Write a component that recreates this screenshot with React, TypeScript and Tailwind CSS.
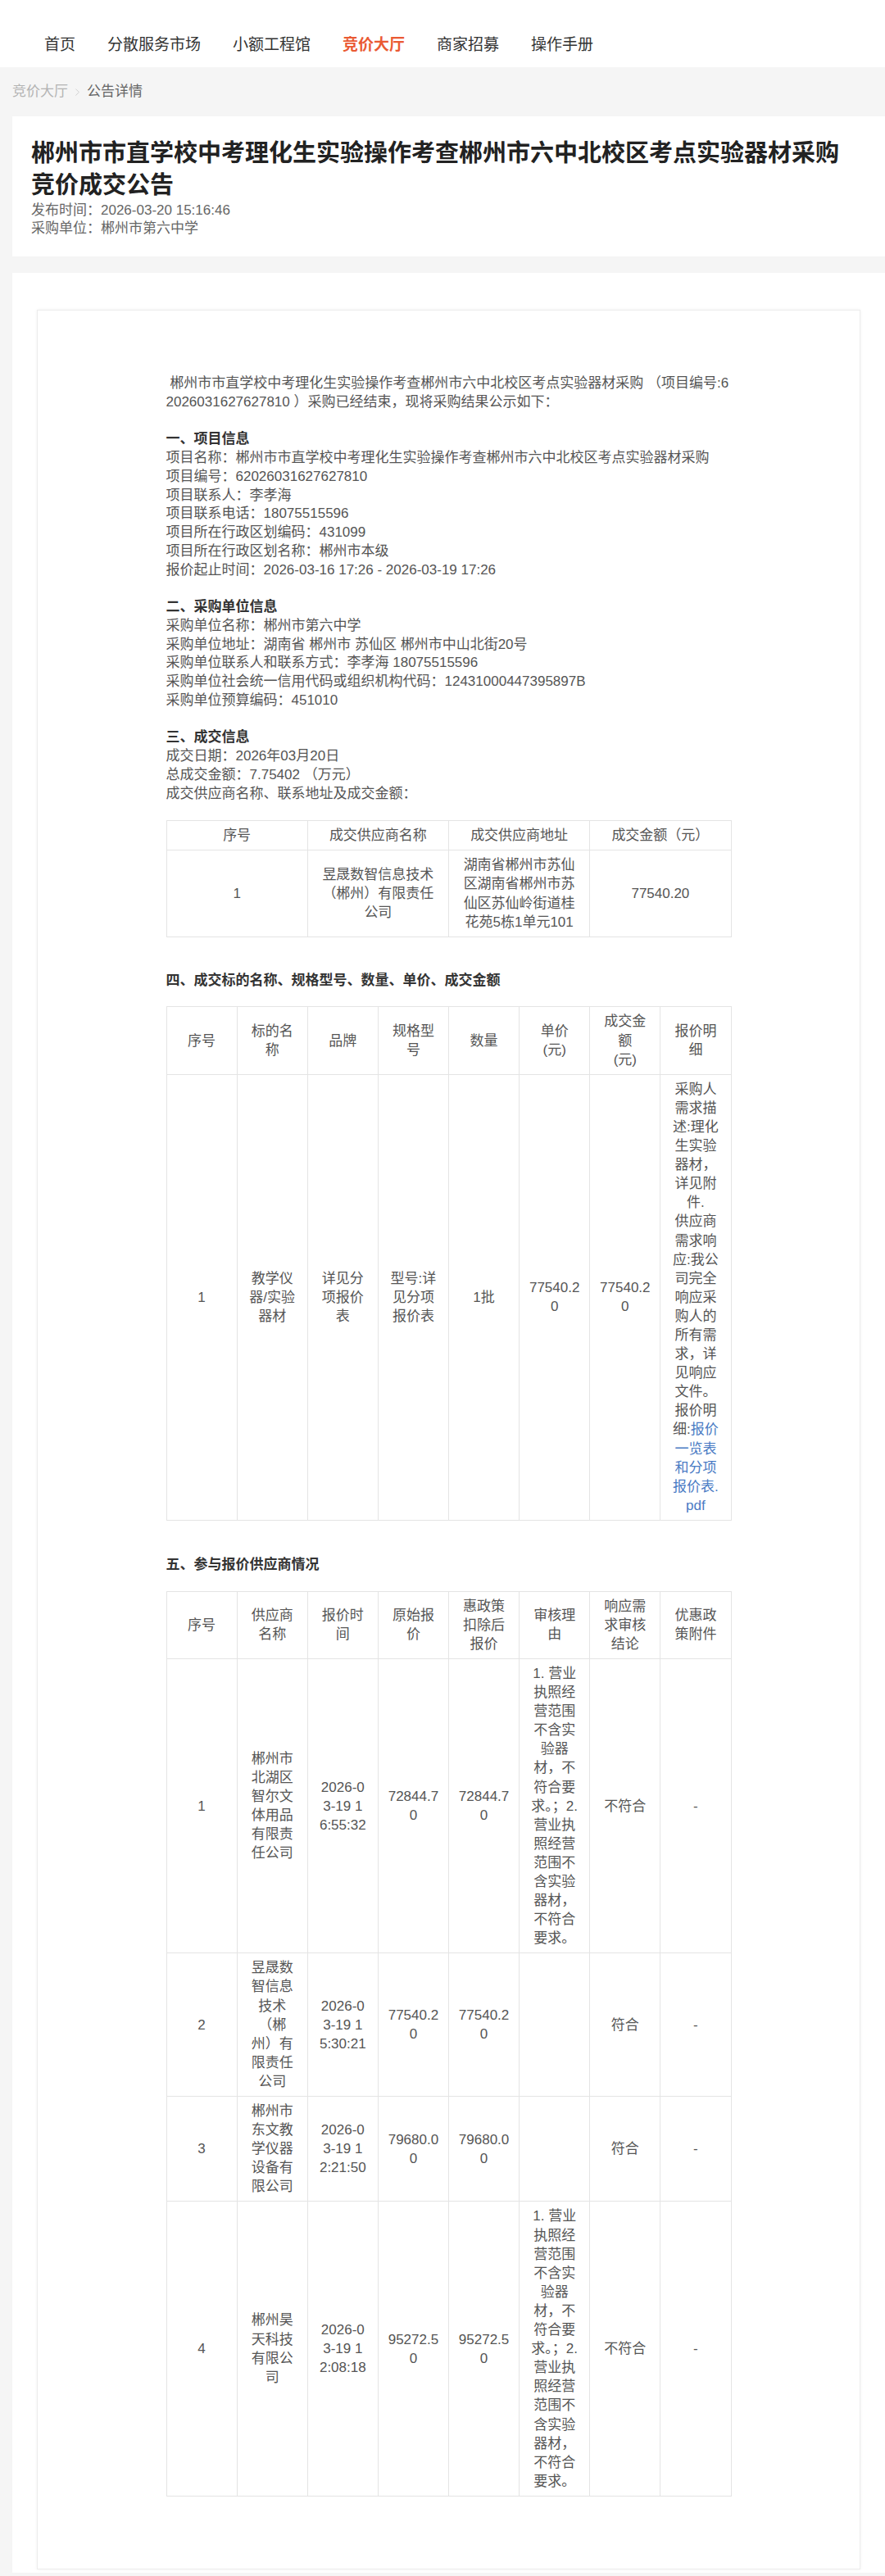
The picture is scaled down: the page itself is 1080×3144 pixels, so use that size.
import { ChevronRight } from 'lucide-react';

const NAV = ['首页', '分散服务市场', '小额工程馆', '竞价大厅', '商家招募', '操作手册'];

const PROJECT = [
  '项目名称：郴州市市直学校中考理化生实验操作考查郴州市六中北校区考点实验器材采购',
  '项目编号：62026031627627810',
  '项目联系人：李孝海',
  '项目联系电话：18075515596',
  '项目所在行政区划编码：431099',
  '项目所在行政区划名称：郴州市本级',
  '报价起止时间：2026-03-16 17:26 - 2026-03-19 17:26',
];

const BUYER = [
  '采购单位名称：郴州市第六中学',
  '采购单位地址：湖南省 郴州市 苏仙区 郴州市中山北街20号',
  '采购单位联系人和联系方式：李孝海 18075515596',
  '采购单位社会统一信用代码或组织机构代码：12431000447395897B',
  '采购单位预算编码：451010',
];

const DEAL = [
  '成交日期：2026年03月20日',
  '总成交金额：7.75402 （万元）',
  '成交供应商名称、联系地址及成交金额：',
];

const REJECT =
  '1. 营业\n执照经\n营范围\n不含实\n验器\n材，不\n符合要\n求。；2.\n营业执\n照经营\n范围不\n含实验\n器材，\n不符合\n要求。';

const BIDDERS = [
  ['1', '郴州市\n北湖区\n智尔文\n体用品\n有限责\n任公司', '2026-0\n3-19 1\n6:55:32', '72844.7\n0', '72844.7\n0', REJECT, '不符合', '-'],
  ['2', '昱晟数\n智信息\n技术\n（郴\n州）有\n限责任\n公司', '2026-0\n3-19 1\n5:30:21', '77540.2\n0', '77540.2\n0', '', '符合', '-'],
  ['3', '郴州市\n东文教\n学仪器\n设备有\n限公司', '2026-0\n3-19 1\n2:21:50', '79680.0\n0', '79680.0\n0', '', '符合', '-'],
  ['4', '郴州昊\n天科技\n有限公\n司', '2026-0\n3-19 1\n2:08:18', '95272.5\n0', '95272.5\n0', REJECT, '不符合', '-'],
];

const cell =
  'border border-[#e4e4e4] px-[10px] py-[6px] text-center align-middle whitespace-pre leading-[23.1px] font-normal';

function Table({ head, rows }: { head: string[]; rows: React.ReactNode[][] }) {
  return (
    <table className="w-[690px] table-fixed border-collapse text-[17px] text-[#555]">
      <thead>
        <tr>
          {head.map((h, i) => (
            <th key={i} className={cell}>{h}</th>
          ))}
        </tr>
      </thead>
      <tbody>
        {rows.map((r, i) => (
          <tr key={i}>
            {r.map((c, j) => (
              <td key={j} className={cell}>{c}</td>
            ))}
          </tr>
        ))}
      </tbody>
    </table>
  );
}

export default function App() {
  return (
    <div className="min-h-screen bg-[#f5f5f5] font-[family-name:'Liberation_Sans','Noto_Sans_CJK_SC',sans-serif] text-[#333]">
      {/* ── Top nav ── */}
      <nav className="h-[82px] bg-white pt-[42px] pl-[54px]">
        <ul className="flex gap-[39px] text-[19px] leading-[26px]">
          {NAV.map((n) => (
            <li key={n} className={n === '竞价大厅' ? 'text-[#ea5a33] font-bold' : 'text-[#333]'}>
              {n}
            </li>
          ))}
        </ul>
      </nav>

      <main className="pl-[15px]">
        {/* ── Breadcrumb ── */}
        <div className="h-[60px] flex items-center text-[17px]">
          <span className="text-[#b3b3b3]">竞价大厅</span>
          <ChevronRight size={15} strokeWidth={1.3} className="text-[#c8c8c8] mx-[4px]" />
          <span className="text-[#666]">公告详情</span>
        </div>

        {/* ── Title card ── */}
        <div className="bg-white pl-[23px] pr-[40px] pt-[26px] pb-[23px] mb-[20px]">
          <h1 className="text-[29px] leading-[39px] font-bold text-[#222]">
            郴州市市直学校中考理化生实验操作考查郴州市六中北校区考点实验器材采购竞价成交公告
          </h1>
          <div className="text-[17px] leading-[22px] text-[#666]">
            <p>发布时间：2026-03-20 15:16:46</p>
            <p>采购单位：郴州市第六中学</p>
          </div>
        </div>

        {/* ── Notice body ── */}
        <div className="bg-white px-[30px] pt-[45px] pb-[4px]">
          <div className="border border-[#ececec] shadow-[0_0_4px_rgba(0,0,0,0.05)] pt-[78px] pb-[88px]">
            <div className="w-[690px] mx-auto text-[17px] leading-[22.75px] text-[#555]">
              <p>
                {'\u00a0'}郴州市市直学校中考理化生实验操作考查郴州市六中北校区考点实验器材采购 （项目编号:6
                <br />
                2026031627627810 ）采购已经结束，现将采购结果公示如下：
              </p>

              <section className="mt-[22.75px]">
                <h3 className="font-bold text-[#333]">一、项目信息</h3>
                {PROJECT.map((l) => (
                  <p key={l}>{l}</p>
                ))}
              </section>

              <section className="mt-[22.75px]">
                <h3 className="font-bold text-[#333]">二、采购单位信息</h3>
                {BUYER.map((l) => (
                  <p key={l}>{l}</p>
                ))}
              </section>

              <section className="mt-[22.75px]">
                <h3 className="font-bold text-[#333]">三、成交信息</h3>
                {DEAL.map((l) => (
                  <p key={l}>{l}</p>
                ))}
              </section>

              <div className="mt-[21px]">
                <Table
                  head={['序号', '成交供应商名称', '成交供应商地址', '成交金额（元）']}
                  rows={[
                    [
                      '1',
                      '昱晟数智信息技术\n（郴州）有限责任\n公司',
                      '湖南省郴州市苏仙\n区湖南省郴州市苏\n仙区苏仙岭街道桂\n花苑5栋1单元101',
                      '77540.20',
                    ],
                  ]}
                />
              </div>

              <h3 className="mt-[42px] mb-[20px] font-bold text-[#333]">
                四、成交标的名称、规格型号、数量、单价、成交金额
              </h3>
              <Table
                head={['序号', '标的名\n称', '品牌', '规格型\n号', '数量', '单价\n(元)', '成交金\n额\n(元)', '报价明\n细']}
                rows={[
                  [
                    '1',
                    '教学仪\n器/实验\n器材',
                    '详见分\n项报价\n表',
                    '型号:详\n见分项\n报价表',
                    '1批',
                    '77540.2\n0',
                    '77540.2\n0',
                    <>
                      {'采购人\n需求描\n述:理化\n生实验\n器材，\n详见附\n件.\n供应商\n需求响\n应:我公\n司完全\n响应采\n购人的\n所有需\n求，详\n见响应\n文件。\n报价明\n细:'}
                      <a className="text-[#4a7bc4]">{'报价\n一览表\n和分项\n报价表.\npdf'}</a>
                    </>,
                  ],
                ]}
              />

              <h3 className="mt-[43px] mb-[20px] font-bold text-[#333]">五、参与报价供应商情况</h3>
              <Table
                head={[
                  '序号',
                  '供应商\n名称',
                  '报价时\n间',
                  '原始报\n价',
                  '惠政策\n扣除后\n报价',
                  '审核理\n由',
                  '响应需\n求审核\n结论',
                  '优惠政\n策附件',
                ]}
                rows={BIDDERS}
              />
            </div>
          </div>
        </div>
      </main>
    </div>
  );
}
